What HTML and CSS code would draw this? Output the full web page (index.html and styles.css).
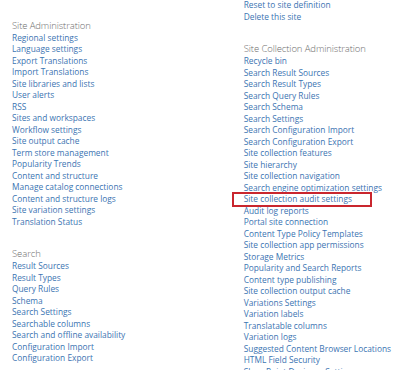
FILE: index.html
```html
<!DOCTYPE html>
<html>
<head>
<meta charset="utf-8">
<link rel="stylesheet" href="styles.css">
</head>
<body>
<div class="page">
  <div class="col col-left">
    <div class="section first-left">
      <div class="hdr">Site Administration</div>
      <ul class="links">
        <li><a>Regional settings</a></li>
        <li><a>Language settings</a></li>
        <li><a>Export Translations</a></li>
        <li><a>Import Translations</a></li>
        <li><a>Site libraries and lists</a></li>
        <li><a>User alerts</a></li>
        <li><a>RSS</a></li>
        <li><a>Sites and workspaces</a></li>
        <li><a>Workflow settings</a></li>
        <li><a>Site output cache</a></li>
        <li><a>Term store management</a></li>
        <li><a>Popularity Trends</a></li>
        <li><a>Content and structure</a></li>
        <li><a>Manage catalog connections</a></li>
        <li><a>Content and structure logs</a></li>
        <li><a>Site variation settings</a></li>
        <li><a>Translation Status</a></li>
      </ul>
    </div>
    <div class="section">
      <div class="hdr">Search</div>
      <ul class="links">
        <li><a>Result Sources</a></li>
        <li><a>Result Types</a></li>
        <li><a>Query Rules</a></li>
        <li><a>Schema</a></li>
        <li><a>Search Settings</a></li>
        <li><a>Searchable columns</a></li>
        <li><a>Search and offline availability</a></li>
        <li><a>Configuration Import</a></li>
        <li><a>Configuration Export</a></li>
      </ul>
    </div>
  </div>
  <div class="col col-right">
    <div class="section first-right">
      <ul class="links">
        <li><a>Reset to site definition</a></li>
        <li><a>Delete this site</a></li>
      </ul>
    </div>
    <div class="section">
      <div class="hdr">Site Collection Administration</div>
      <ul class="links">
        <li><a>Recycle bin</a></li>
        <li><a>Search Result Sources</a></li>
        <li><a>Search Result Types</a></li>
        <li><a>Search Query Rules</a></li>
        <li><a>Search Schema</a></li>
        <li><a>Search Settings</a></li>
        <li><a>Search Configuration Import</a></li>
        <li><a>Search Configuration Export</a></li>
        <li><a>Site collection features</a></li>
        <li><a>Site hierarchy</a></li>
        <li><a>Site collection navigation</a></li>
        <li><a>Search engine optimization settings</a></li>
        <li class="marked"><a>Site collection audit settings</a></li>
        <li><a>Audit log reports</a></li>
        <li><a>Portal site connection</a></li>
        <li><a>Content Type Policy Templates</a></li>
        <li><a>Site collection app permissions</a></li>
        <li><a>Storage Metrics</a></li>
        <li><a>Popularity and Search Reports</a></li>
        <li><a>Content type publishing</a></li>
        <li><a>Site collection output cache</a></li>
        <li><a>Variations Settings</a></li>
        <li><a>Variation labels</a></li>
        <li><a>Translatable columns</a></li>
        <li><a>Variation logs</a></li>
        <li><a>Suggested Content Browser Locations</a></li>
        <li><a>HTML Field Security</a></li>
        <li><a>SharePoint Designer Settings</a></li>
      </ul>
    </div>
  </div>
</div>
</body>
</html>
```
FILE: styles.css
```css
html, body {
  margin: 0;
  padding: 0;
  background: #ffffff;
  overflow: hidden;
}
body {
  font-family: "Open Sans", "Noto Sans", sans-serif;
}
.page {
  display: grid;
  grid-template-columns: 231.7px 1fr;
  padding-left: 12px;
  height: 370px;
  overflow: hidden;
}
.col {
  display: flex;
  flex-direction: column;
}
.first-left {
  margin-top: 18.5px;
}
.first-right {
  margin-top: -1px;
}
.col-left .section + .section {
  margin-top: 19.3px;
}
.col-right .section + .section {
  margin-top: 19.7px;
}
.hdr {
  font-size: 9.5px;
  font-weight: 300;
  letter-spacing: -0.1px;
  line-height: 13.4px;
  color: #6e6e6e;
  white-space: nowrap;
}
.links {
  list-style: none;
  margin: 0;
  padding: 0;
}
.links li {
  font-size: 8.35px;
  line-height: 11.5px;
  height: 11.5px;
  white-space: nowrap;
  color: #3b74b2;
}
.links a {
  color: inherit;
  text-decoration: none;
}
.marked {
  position: relative;
}
.marked::after {
  content: "";
  position: absolute;
  left: -12px;
  top: -1px;
  width: 136px;
  height: 11.4px;
  border: 2px solid #c9262e;
}
```
